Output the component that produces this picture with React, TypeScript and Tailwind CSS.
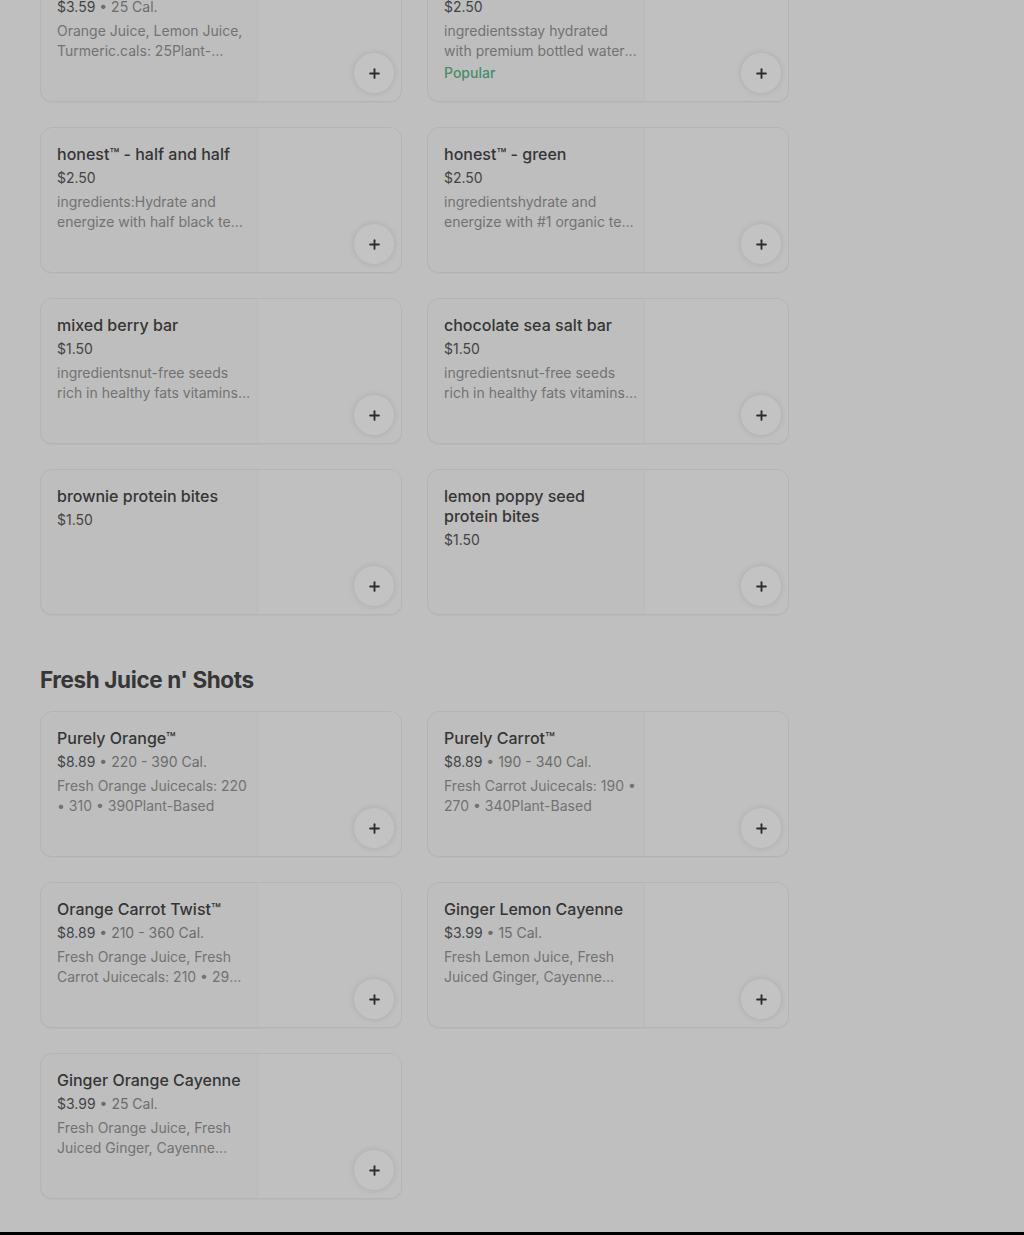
import { Plus } from "lucide-react";

type Item = {
  title: string;
  price: string;
  cal?: string;
  desc?: string;
  popular?: boolean;
};

const snacks: Item[] = [
  {
    title: "Lemon Turmeric Shot",
    price: "$3.59",
    cal: "25 Cal.",
    desc: "Orange Juice, Lemon Juice, Turmeric.cals: 25Plant-Based",
  },
  {
    title: "honest™ - water",
    price: "$2.50",
    desc: "ingredientsstay hydrated with premium bottled water from natural springs",
    popular: true,
  },
  {
    title: "honest™ - half and half",
    price: "$2.50",
    desc: "ingredients:Hydrate and energize with half black tea and half lemonade",
  },
  {
    title: "honest™ - green",
    price: "$2.50",
    desc: "ingredientshydrate and energize with #1 organic tea brand",
  },
  {
    title: "mixed berry bar",
    price: "$1.50",
    desc: "ingredientsnut-free seeds rich in healthy fats vitamins and minerals",
  },
  {
    title: "chocolate sea salt bar",
    price: "$1.50",
    desc: "ingredientsnut-free seeds rich in healthy fats vitamins and minerals",
  },
  { title: "brownie protein bites", price: "$1.50" },
  { title: "lemon poppy seed protein bites", price: "$1.50" },
];

const juices: Item[] = [
  {
    title: "Purely Orange™",
    price: "$8.89",
    cal: "220 - 390 Cal.",
    desc: "Fresh Orange Juicecals: 220 • 310 • 390Plant-Based",
  },
  {
    title: "Purely Carrot™",
    price: "$8.89",
    cal: "190 - 340 Cal.",
    desc: "Fresh Carrot Juicecals: 190 • 270 • 340Plant-Based",
  },
  {
    title: "Orange Carrot Twist™",
    price: "$8.89",
    cal: "210 - 360 Cal.",
    desc: "Fresh Orange Juice, Fresh Carrot Juicecals: 210 • 290 • 360Plant-Based",
  },
  {
    title: "Ginger Lemon Cayenne",
    price: "$3.99",
    cal: "15 Cal.",
    desc: "Fresh Lemon Juice, Fresh Juiced Ginger, Cayenne Pepper, Plant-Based",
  },
  {
    title: "Ginger Orange Cayenne",
    price: "$3.99",
    cal: "25 Cal.",
    desc: "Fresh Orange Juice, Fresh Juiced Ginger, Cayenne Pepper, Plant-Based",
  },
];

function ItemCard({ item }: { item: Item }) {
  return (
    <div className="relative flex h-[146px] overflow-hidden rounded-[12px] border border-[#b4b4b4] bg-[#bebebe] shadow-[0_1px_0_#b9b9b9]">
      <div className="flex w-[216px] shrink-0 flex-col py-4 pl-4 pr-[7px]">
        <div className="pr-1 text-[16px] font-medium leading-5 text-[#353535]">{item.title}</div>
        <div className="mt-1 text-[14px] leading-5 text-[#444]">
          {item.price}
          {item.cal && <span className="text-[#6c6c6c]"> • {item.cal}</span>}
        </div>
        {item.desc && (
          <div className="mt-1 line-clamp-2 text-[14px] leading-5 text-[#727272]">{item.desc}</div>
        )}
        {item.popular && (
          <div className="mt-[2px] text-[14px] font-medium leading-5 text-[#4b8b68]">Popular</div>
        )}
      </div>
      <div className="flex-1 border-l border-[#b9b9b9] bg-[#c0c0c0]" />
      <button
        type="button"
        className="absolute right-[7px] bottom-[8px] flex size-10 items-center justify-center rounded-full bg-[#c3c3c3] shadow-[0_0_6px_rgba(0,0,0,0.12)]"
      >
        <Plus className="size-[15px] text-[#2d2d2d]" strokeWidth={3} />
      </button>
    </div>
  );
}

export default function App() {
  return (
    <div className="flex h-[1235px] flex-col overflow-hidden bg-[#bfbfbf] font-['Inter',sans-serif]">
      <main className="flex-1 px-10">
        <div className="mt-[-44px] grid w-[749px] grid-cols-2 gap-x-[25px] gap-y-[25px]">
          {snacks.map((it) => (
            <ItemCard key={it.title} item={it} />
          ))}
        </div>

        <h2 className="mt-[49px] mb-[15px] text-[22.5px] font-bold leading-8 tracking-[-0.4px] text-[#363636]">
          Fresh Juice n' Shots
        </h2>

        <div className="grid w-[749px] grid-cols-2 gap-x-[25px] gap-y-[25px]">
          {juices.map((it) => (
            <ItemCard key={it.title} item={it} />
          ))}
        </div>
      </main>
      <div className="h-[3px] bg-black" />
    </div>
  );
}
